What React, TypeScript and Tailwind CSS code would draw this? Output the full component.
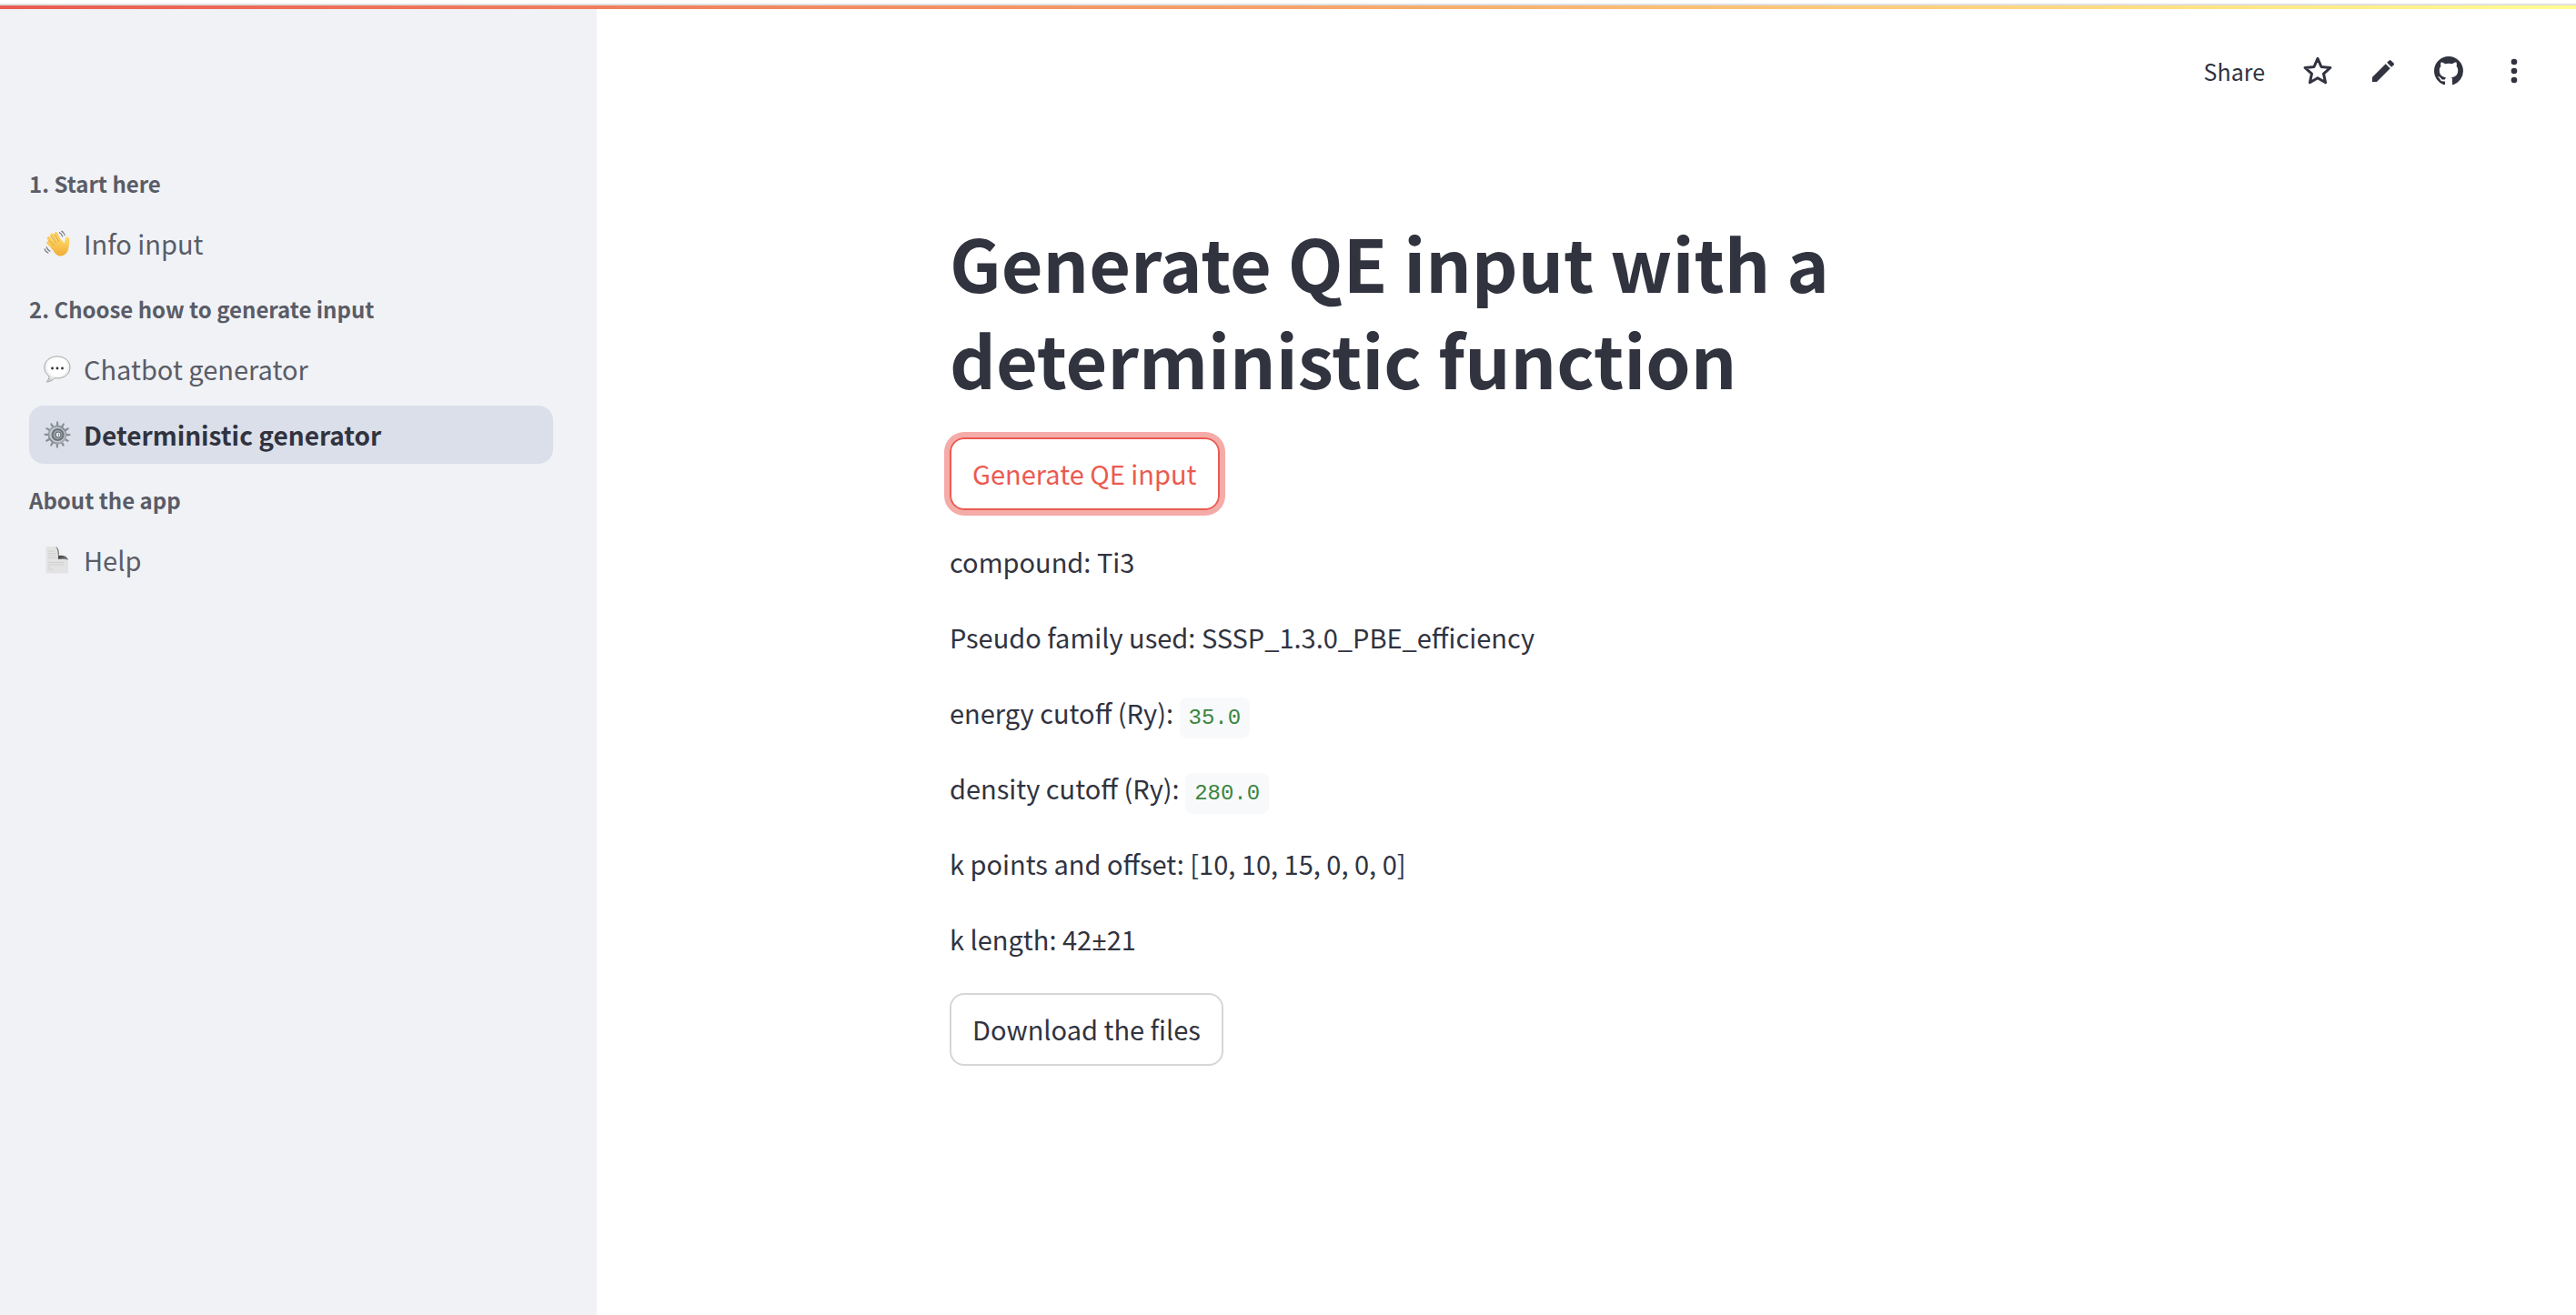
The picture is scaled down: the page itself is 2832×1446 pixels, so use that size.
import React from "react";

function WaveIcon() {
  return (
    <svg viewBox="0 0 30 30" className="size-[30px]" aria-hidden="true">
      <defs>
        <linearGradient id="skin" x1="0" y1="0" x2="0" y2="1">
          <stop offset="0" stopColor="#ffdc6b" />
          <stop offset="1" stopColor="#efac35" />
        </linearGradient>
      </defs>
      <g stroke="#fbcb57" strokeWidth="3.6" strokeLinecap="round" fill="none">
        <path d="M11 20 5 14" />
        <path d="M12 17 5.500 9" />
        <path d="M15 15 9 5.500" />
        <path d="M18 13 13.500 4" />
      </g>
      <path
        d="M8 19C7 15 15 9 19 10.500c1.500 1 2.500 2.500 3.600 3.800.8-.5.700-2.800 1.300-5.300.6-2.300 3.900-2.100 4.100.5.300 3.500-.1 6.500-.5 9.500-.5 4.500-3.500 9.200-8.800 9.500C14 28.700 11 23.500 8 19z"
        fill="url(#skin)"
      />
      <path d="M14 14.500 7.500 6.500M17 13 11.300 4.500M12 17 5.500 11.500" stroke="#d8932c" strokeWidth=".8" fill="none" />
      <path
        d="M17 2.500c2 1 3.300 2.600 3.800 4.800M19.500 1c2 1.200 3.300 3 3.800 5.200M3 18.500c.8 2.300 2.300 4 4.300 5M.8 20.500c.8 2.300 2.400 4 4.500 4.800"
        stroke="#6e6e72"
        strokeWidth="1.1"
        fill="none"
      />
    </svg>
  );
}

function BubbleIcon() {
  return (
    <svg viewBox="0 0 30 30" className="size-[30px]" aria-hidden="true">
      <defs>
        <radialGradient id="bubble" cx=".5" cy=".4" r=".6">
          <stop offset=".6" stopColor="#ffffff" />
          <stop offset="1" stopColor="#cfcfcf" />
        </radialGradient>
      </defs>
      <path
        d="M15 1C7 1 .8 5.800.8 13c0 4.200 2 7.500 5.200 9.600C6 25 5 27 3 29c4 0 7-2 9-4.300 1 .2 2 .3 3 .3 8 0 14-4.700 14-12S23 1 15 1z"
        fill="url(#bubble)"
        stroke="#a9a9a9"
        strokeWidth="1"
      />
      <g fill="#333">
        <circle cx="9.500" cy="14" r="1.400" />
        <circle cx="15" cy="14" r="1.400" />
        <circle cx="20.500" cy="14" r="1.400" />
      </g>
    </svg>
  );
}

const teeth = [0, 30, 60, 90, 120, 150, 180, 210, 240, 270, 300, 330];

function GearIcon() {
  return (
    <svg viewBox="0 0 30 30" className="size-[30px]" aria-hidden="true">
      <defs>
        <linearGradient id="steel" x1="0" y1="0" x2="1" y2="1">
          <stop offset="0" stopColor="#a3abb2" />
          <stop offset=".5" stopColor="#7e868c" />
          <stop offset="1" stopColor="#b3bac0" />
        </linearGradient>
      </defs>
      {teeth.map((a) => (
        <path key={a} d="M13.800 5 14.200.6h1.800l.4 4.400z" fill="#858e95" transform={`rotate(${a} 15 15)`} />
      ))}
      <circle cx="15" cy="15" r="9.500" fill="#c6cdd4" stroke="url(#steel)" strokeWidth="1.800" />
      <circle cx="15.500" cy="15" r="6" fill="#9aa2a9" stroke="#6d757b" strokeWidth="2.200" />
      <circle cx="16" cy="15" r="3" fill="#e2e6eb" stroke="#5d646a" strokeWidth="1" />
      <path d="M16 13.500a2 2 0 0 1 0 3z" fill="#333" />
    </svg>
  );
}

function PageIcon() {
  return (
    <svg viewBox="0 0 30 30" className="size-[30px]" aria-hidden="true">
      <defs>
        <linearGradient id="curl" x1="0" y1="0" x2="1" y2="1">
          <stop offset="0" stopColor="#8d8d8d" />
          <stop offset=".5" stopColor="#444444" />
          <stop offset="1" stopColor="#8a8a8a" />
        </linearGradient>
      </defs>
      <path d="M2.500 0H14c3 2 10 9 13 14v15.500H2.500z" fill="#e3e3e3" />
      <path d="M5 5h8M5 7.500h9M5 10h9M5 12.500h10M5 17.500h18M5 20h17M5 22.500h2M5 25h5" stroke="#cbcbcb" strokeWidth=".8" />
      <path d="M13 0c4 1 4 6 3.500 10C20 9.500 26 10 27 15c-2.500-1.500-6-1.500-11-1 0-5 0-11-3-14z" fill="url(#curl)" />
      <path d="M14.500.5C19 3 24 7.500 26.500 12 24 9.800 20 9.300 17 9.800 17.300 6 17 2.500 14.500.5z" fill="#f0f2f6" />
    </svg>
  );
}

type Item = { label: string; icon: React.ReactNode; active?: boolean };

const sections: { title: string; items: Item[] }[] = [
  { title: "1. Start here", items: [{ label: "Info input", icon: <WaveIcon /> }] },
  {
    title: "2. Choose how to generate input",
    items: [
      { label: "Chatbot generator", icon: <BubbleIcon /> },
      { label: "Deterministic generator", icon: <GearIcon />, active: true },
    ],
  },
  { title: "About the app", items: [{ label: "Help", icon: <PageIcon /> }] },
];

function Sidebar() {
  return (
    <nav className="w-[656px] shrink-0 bg-[#f0f2f6] pt-[167px] pr-12 pl-8">
      {sections.map((s) => (
        <section key={s.title} className="pb-[15px]">
          <h2 className="mb-[9px] text-2xl leading-[50px] font-bold text-[#5a5c66]">{s.title}</h2>
          <ul className="flex flex-col gap-2">
            {s.items.map((i) => (
              <li key={i.label}>
                <a
                  href="#"
                  aria-current={i.active ? "page" : undefined}
                  className={
                    i.active
                      ? "flex h-16 items-center gap-[14px] rounded-2xl bg-[#dbdfe9] px-4 text-[28px] font-bold text-[#31333f]"
                      : "flex h-16 items-center gap-[14px] rounded-2xl px-4 text-[29px] text-[#5a5c66]"
                  }
                >
                  {i.icon}
                  {i.label}
                </a>
              </li>
            ))}
          </ul>
        </section>
      ))}
    </nav>
  );
}

function Toolbar() {
  return (
    <div className="flex h-[136px] items-center justify-end gap-9 pr-[50px] text-[#31333f]">
      <button className="mr-1 text-[25px] leading-9">Share</button>
      <button aria-label="Favorite" className="flex size-9 items-center justify-center">
        <svg viewBox="0 0 36 36" className="size-9" fill="none" stroke="currentColor" strokeWidth="3" strokeLinejoin="round">
          <path d="M18 4.400 22 13.500 31.900 14.500 24.500 21.100 26.600 30.800 18 25.800 9.400 30.800 11.500 21.100 4.100 14.500 14 13.500z" />
        </svg>
      </button>
      <button aria-label="Edit" className="flex size-9 items-center justify-center">
        <svg viewBox="0 0 24 24" className="size-8" fill="currentColor">
          <path d="M3 17.250V21h3.750L17.810 9.940l-3.750-3.750L3 17.250zM20.710 7.040a1 1 0 0 0 0-1.410l-2.340-2.340a1 1 0 0 0-1.410 0l-1.830 1.830 3.750 3.750 1.830-1.830z" />
        </svg>
      </button>
      <button aria-label="GitHub" className="flex size-9 items-center justify-center">
        <svg viewBox="0 0 16 16" className="size-8" fill="currentColor">
          <path d="M8 0C3.580 0 0 3.580 0 8c0 3.540 2.290 6.530 5.470 7.590.4.070.55-.17.55-.38 0-.19-.01-.82-.01-1.490-2.010.37-2.530-.49-2.690-.94-.09-.23-.48-.94-.82-1.130-.28-.15-.68-.52-.01-.53.63-.01 1.080.58 1.230.82.72 1.210 1.870.87 2.330.66.07-.52.28-.87.51-1.070-1.780-.2-3.640-.89-3.640-3.950 0-.87.31-1.590.82-2.150-.08-.2-.36-1.020.08-2.120 0 0 .67-.21 2.200.82.64-.18 1.320-.27 2-.27s1.360.09 2 .27c1.530-1.040 2.200-.82 2.200-.82.44 1.100.16 1.920.08 2.120.51.56.82 1.270.82 2.150 0 3.070-1.870 3.750-3.650 3.950.29.25.54.73.54 1.480 0 1.070-.01 1.930-.01 2.200 0 .21.15.46.55.38A8.010 8.010 0 0 0 16 8c0-4.420-3.580-8-8-8z" />
        </svg>
      </button>
      <button aria-label="Main menu" className="flex size-9 items-center justify-center">
        <svg viewBox="0 0 36 36" className="size-9" fill="currentColor">
          <circle cx="18" cy="8" r="3.300" />
          <circle cx="18" cy="18" r="3.300" />
          <circle cx="18" cy="28" r="3.300" />
        </svg>
      </button>
    </div>
  );
}

function Value({ children }: { children: React.ReactNode }) {
  return (
    <code className="rounded-lg bg-[#f8f9fb] px-[10px] py-[9px] font-['Liberation_Mono',monospace] text-2xl text-[#3a8540]">
      {children}
    </code>
  );
}

export default function App() {
  return (
    <div className="flex min-h-screen flex-col bg-white font-['Noto_Sans_CJK_SC',sans-serif] text-[#31333f]">
      <div className="mt-1 h-[2px] bg-[#e0e0e0]" />
      <div className="h-1 bg-linear-to-r from-[#ea5c52] via-[#f5a36a] to-[#fffd91]" />
      <div className="flex flex-1">
        <Sidebar />
        <main className="flex-1">
          <Toolbar />
          <div className="mx-auto flex max-w-[1400px] flex-col items-start pt-[89px]">
            <h1 className="pb-[34px] text-[79px] leading-[106px] font-bold">
              Generate QE input with a deterministic function
            </h1>
            <button className="h-20 rounded-2xl border-2 border-[#eb5a50] px-[23px] text-[29px] text-[#eb5a50] ring-6 ring-[#f5aba8]">
              Generate QE input
            </button>
            <div className="flex flex-col gap-8 pt-[31px] pb-[34px] text-[29px] leading-[51px]">
              <p>compound: Ti3</p>
              <p>Pseudo family used: SSSP_1.3.0_PBE_efficiency</p>
              <p>
                energy cutoff (Ry): <Value>35.0</Value>
              </p>
              <p>
                density cutoff (Ry): <Value>280.0</Value>
              </p>
              <p>k points and offset: [10, 10, 15, 0, 0, 0]</p>
              <p>
                k length: 42<span className="font-['Noto_Sans',sans-serif] leading-none">±</span>21
              </p>
            </div>
            <button className="h-20 rounded-2xl border-2 border-[#d6d6d9] px-[23px] text-[29px]">Download the files</button>
          </div>
        </main>
      </div>
    </div>
  );
}
